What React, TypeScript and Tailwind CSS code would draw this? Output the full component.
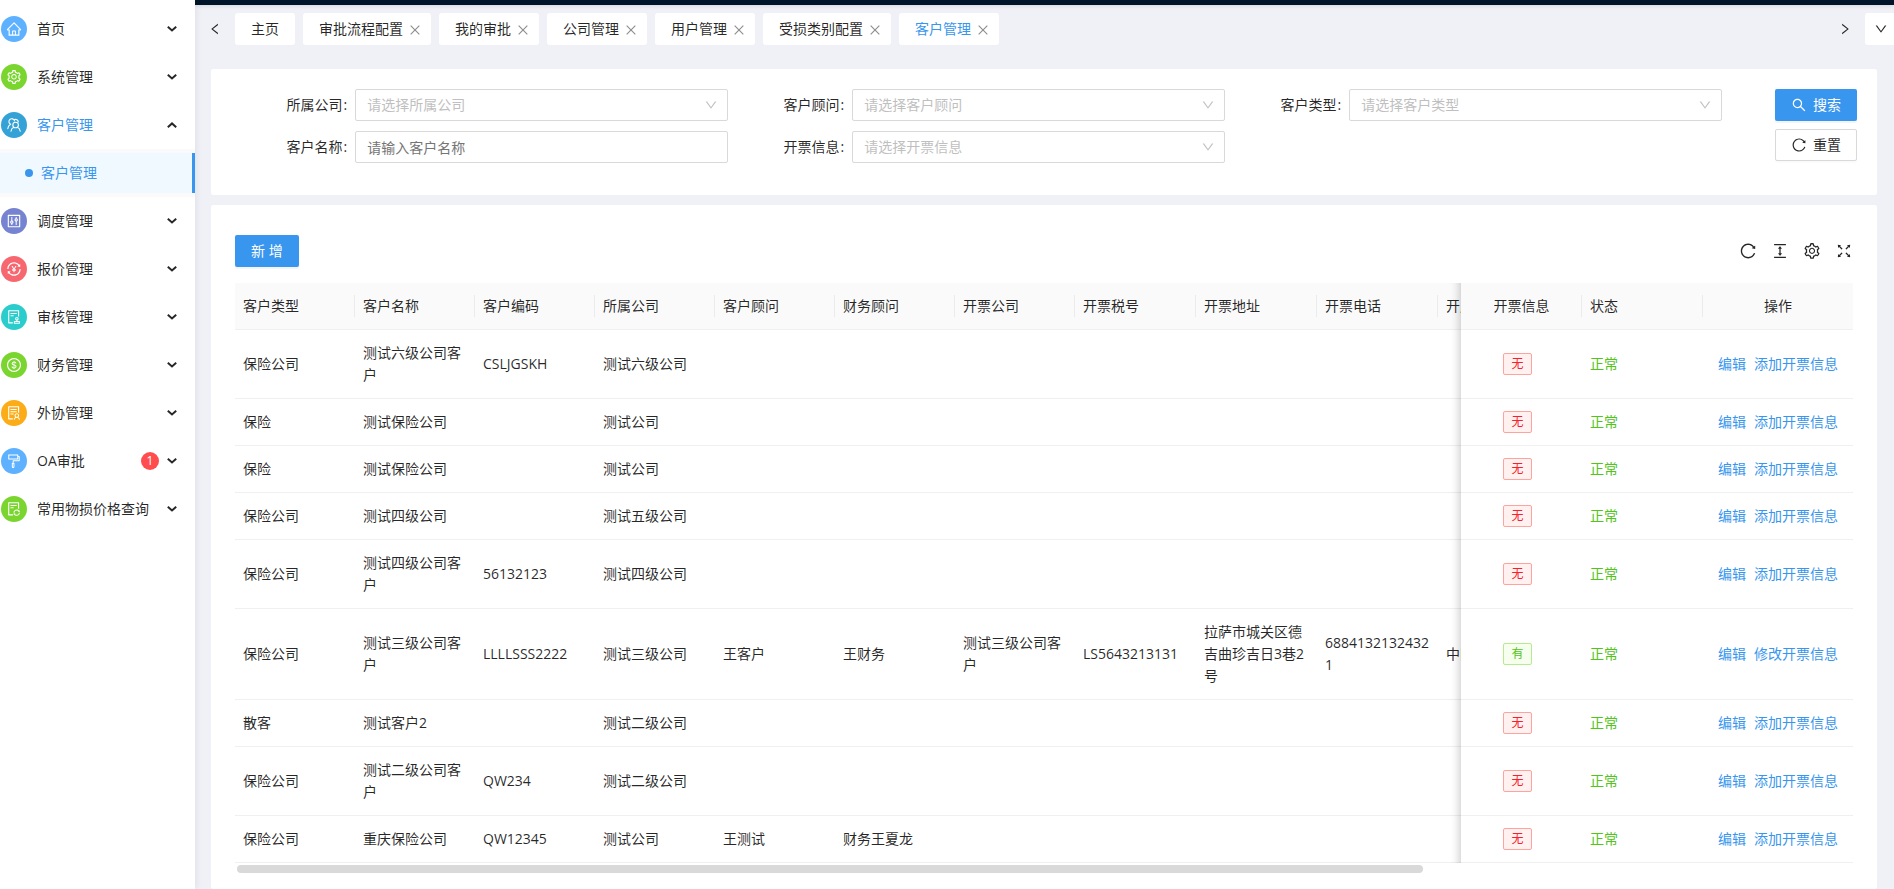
import { useState, type ReactNode } from "react";
import clsx from "clsx";
import {
  AiOutlineAudit,
  AiOutlineClose,
  AiOutlineColumnHeight,
  AiOutlineControl,
  AiOutlineDollar,
  AiOutlineDown,
  AiOutlineFileSync,
  AiOutlineFormatPainter,
  AiOutlineFullscreen,
  AiOutlineHome,
  AiOutlineLeft,
  AiOutlineReload,
  AiOutlineRight,
  AiOutlineSearch,
  AiOutlineSetting,
  AiOutlineSolution,
  AiOutlineTransaction,
} from "react-icons/ai";

const MENU = [
  { label: "首页", color: "bg-[#5eb1ff]", icon: <AiOutlineHome /> },
  { label: "系统管理", color: "bg-[#7ad52f]", icon: <AiOutlineSetting /> },
  { label: "客户管理", color: "bg-[#34a2d6]", icon: <UsersIcon />, children: ["客户管理"] },
  { label: "调度管理", color: "bg-[#7583d1]", icon: <AiOutlineControl /> },
  { label: "报价管理", color: "bg-[#f7676f]", icon: <AiOutlineTransaction /> },
  { label: "审核管理", color: "bg-[#2bcdcc]", icon: <AiOutlineAudit /> },
  { label: "财务管理", color: "bg-[#7ad52f]", icon: <AiOutlineDollar /> },
  { label: "外协管理", color: "bg-[#fcac17]", icon: <AiOutlineSolution /> },
  { label: "OA审批", color: "bg-[#5eb1ff]", icon: <AiOutlineFormatPainter />, badge: 1 },
  { label: "常用物损价格查询", color: "bg-[#7ad52f]", icon: <AiOutlineFileSync /> },
];

const TABS = ["主页", "审批流程配置", "我的审批", "公司管理", "用户管理", "受损类别配置", "客户管理"];

const COLUMNS = ["客户类型", "客户名称", "客户编码", "所属公司", "客户顾问", "财务顾问", "开票公司", "开票税号", "开票地址", "开票电话", "开户银行"];

const ROWS = [
  { cells: ["保险公司", "测试六级公司客户", "CSLJGSKH", "测试六级公司"], invoice: false },
  { cells: ["保险", "测试保险公司", "", "测试公司"], invoice: false },
  { cells: ["保险", "测试保险公司", "", "测试公司"], invoice: false },
  { cells: ["保险公司", "测试四级公司", "", "测试五级公司"], invoice: false },
  { cells: ["保险公司", "测试四级公司客户", "56132123", "测试四级公司"], invoice: false },
  {
    cells: ["保险公司", "测试三级公司客户", "LLLLSSS2222", "测试三级公司", "王客户", "王财务", "测试三级公司客户", "LS5643213131", "拉萨市城关区德吉曲珍吉日3巷2号", "68841321324321", "中国银行"],
    invoice: true,
  },
  { cells: ["散客", "测试客户2", "", "测试二级公司"], invoice: false },
  { cells: ["保险公司", "测试二级公司客户", "QW234", "测试二级公司"], invoice: false },
  { cells: ["保险公司", "重庆保险公司", "QW12345", "测试公司", "王测试", "财务王夏龙"], invoice: false },
];

export default function App() {
  return (
    <div className="flex min-h-screen bg-[#f0f1f6] font-['Open_Sans','Noto_Sans_CJK_SC',sans-serif] text-sm leading-[22px] text-black/85">
      <Sidebar />
      <div className="flex min-w-0 flex-1 flex-col">
        <header className="h-[5px] shrink-0 bg-[#001529] shadow-[0_1px_4px_rgba(0,21,41,0.12)]" />
        <TabBar />
        <main className="flex flex-1 flex-col gap-2.5 pt-6 pr-[17px] pl-4">
          <SearchForm />
          <CustomerTable />
        </main>
      </div>
    </div>
  );
}

function Sidebar() {
  const [open, setOpen] = useState("客户管理");

  return (
    <aside className="z-10 w-[195px] shrink-0 bg-white pt-[5px] shadow-[2px_0_6px_rgba(0,21,41,0.06)]">
      <nav>
        <ul>
          {MENU.map((item) => {
            const expanded = open === item.label;
            return (
              <li key={item.label}>
                <button
                  type="button"
                  aria-expanded={expanded}
                  onClick={() => setOpen(expanded ? "" : item.label)}
                  className={clsx("flex h-12 w-full items-center pr-[18px] pl-px text-left", expanded && "text-[#3896ee]")}
                >
                  <span className={clsx("mr-2.5 flex size-[26px] shrink-0 items-center justify-center rounded-full text-base text-white", item.color)}>
                    {item.icon}
                  </span>
                  <span className="flex-1 whitespace-nowrap">{item.label}</span>
                  {item.badge && (
                    <span className="mr-2 flex size-[18px] items-center justify-center rounded-full bg-[#ff4d4f] text-xs text-white">{item.badge}</span>
                  )}
                  <MenuArrow up={expanded} />
                </button>
                {expanded && item.children && (
                  <ul className="bg-[#fafafa] py-1">
                    {item.children.map((child) => (
                      <li key={child}>
                        <a href="#" className="flex h-10 items-center gap-2 border-r-3 border-[#3896ee] bg-[#f0f9ff] pl-[25px] text-[#3896ee]">
                          <span className="size-2 rounded-full bg-[#3896ee]" />
                          {child}
                        </a>
                      </li>
                    ))}
                  </ul>
                )}
              </li>
            );
          })}
        </ul>
      </nav>
    </aside>
  );
}

function MenuArrow({ up }: { up: boolean }) {
  return (
    <svg viewBox="0 0 10 10" className="size-2.5 shrink-0 text-black/85" fill="none" stroke="currentColor" strokeWidth="2">
      <path d={up ? "M0.8 7.2 L5 3.4 L9.2 7.2" : "M0.8 2.8 L5 6.4 L9.2 2.8"} />
    </svg>
  );
}

function UsersIcon() {
  return (
    <svg viewBox="0 0 16 16" width="1em" height="1em" fill="none" stroke="currentColor" strokeWidth="1.1" strokeLinecap="round">
      <path d="M4.6 7.3 A2.9 2.9 0 1 1 8.6 3.9" />
      <path d="M4.6 7.3 C3 8.2 2 9.7 1.8 11.6" />
      <path d="M8.4 2.6 C10.2 1.8 12.1 2.9 12.3 4.9" />
      <circle cx="9.6" cy="8" r="2.8" />
      <path d="M5 14.2 C5.2 12.3 6.2 11 7.8 10.3" />
      <path d="M11.4 10.3 C13 11 14 12.3 14.2 14.2" />
    </svg>
  );
}

function TabBar() {
  const [active, setActive] = useState("客户管理");

  return (
    <div className="flex items-center overflow-hidden pt-2">
      <button type="button" aria-label="向左" className="flex h-8 w-10 shrink-0 items-center justify-center">
        <AiOutlineLeft className="size-3.5" />
      </button>
      <div className="flex min-w-0 flex-1 gap-2 overflow-hidden">
        {TABS.map((tab, i) => (
          <div key={tab} className={clsx("flex h-8 shrink-0 items-center rounded-[3px] bg-white pl-4", i === 0 ? "pr-4" : "pr-[9px]")}>
            <button type="button" onClick={() => setActive(tab)} className={clsx(active === tab && "text-[#3896ee]")}>
              {tab}
            </button>
            {i > 0 && (
              <button type="button" aria-label={`关闭${tab}`} className="ml-[5px] pt-0.5 text-black/45">
                <AiOutlineClose className="size-3.5" />
              </button>
            )}
          </div>
        ))}
      </div>
      <button type="button" aria-label="向右" className="flex h-8 w-10 shrink-0 items-center justify-center">
        <AiOutlineRight className="size-3.5" />
      </button>
      <button type="button" aria-label="更多" className="-mr-[3px] flex h-8 w-8 shrink-0 items-center justify-center rounded-[3px] bg-white">
        <AiOutlineDown className="size-3.5" />
      </button>
    </div>
  );
}

function Field({ id, label, children }: { id: string; label: string; children: ReactNode }) {
  return (
    <div className="flex items-center">
      <label htmlFor={id} className="w-1/4 shrink-0 pr-2 text-right">
        {label}
        <span className="ml-px">:</span>
      </label>
      <div className="relative flex-1">{children}</div>
    </div>
  );
}

function SelectField({ id, label }: { id: string; label: string }) {
  return (
    <Field id={id} label={label}>
      <select id={id} defaultValue="" className="h-8 w-full appearance-none rounded-xs border border-[#d9d9d9] bg-white px-[11px] text-[#bfbfbf]">
        <option value="">请选择{label}</option>
      </select>
      <AiOutlineDown className="pointer-events-none absolute top-[9px] right-2.5 size-3.5 text-black/25" />
    </Field>
  );
}

function SearchForm() {
  return (
    <form className="flex gap-[53px] rounded-xs bg-white px-5 pt-5 pb-8" onSubmit={(e) => e.preventDefault()}>
      <div className="grid flex-1 grid-cols-3 content-start gap-y-2.5">
        <SelectField id="company" label="所属公司" />
        <SelectField id="adviser" label="客户顾问" />
        <SelectField id="type" label="客户类型" />
        <Field id="name" label="客户名称">
          <input id="name" placeholder="请输入客户名称" className="h-8 w-full rounded-xs border border-[#d9d9d9] px-[11px] placeholder:text-[#757575]" />
        </Field>
        <SelectField id="invoice" label="开票信息" />
      </div>
      <div className="flex w-[82px] shrink-0 flex-col gap-2">
        <button type="submit" className="flex h-8 items-center justify-center gap-1.5 rounded-xs bg-[#3896ee] text-white shadow-[0_2px_0_rgba(0,0,0,0.045)]">
          <AiOutlineSearch className="size-4" />
          搜索
        </button>
        <button type="reset" className="flex h-8 items-center justify-center gap-1.5 rounded-xs border border-[#d9d9d9] bg-white shadow-[0_2px_0_rgba(0,0,0,0.015)]">
          <AiOutlineReload className="size-4" />
          重置
        </button>
      </div>
    </form>
  );
}

const TH = "relative h-[47px] border-b border-[#f0f0f0] bg-[#fafafa] px-2 font-normal";
const DIVIDER = "after:absolute after:top-3 after:right-0 after:h-[22px] after:w-px after:bg-black/6";
const TD = "border-b border-[#f0f0f0] bg-white px-2 py-3";
// shadow cast by the fixed columns over the scrolled ones
const FIXED_EDGE =
  "before:pointer-events-none before:absolute before:top-0 before:-bottom-px before:-left-[30px] before:w-[30px] before:shadow-[inset_-10px_0_8px_-8px_rgba(0,0,0,0.2)]";

function CustomerTable() {
  return (
    <section className="flex-1 rounded-xs bg-white px-6 pt-[30px] pb-4">
      <div className="mb-4 flex items-center justify-between">
        <button type="button" className="h-8 rounded-xs bg-[#3896ee] px-4 text-white shadow-[0_2px_0_rgba(0,0,0,0.045)]">
          新 增
        </button>
        <div className="flex gap-3.5 text-lg">
          <button type="button" aria-label="刷新"><AiOutlineReload /></button>
          <button type="button" aria-label="密度"><AiOutlineColumnHeight /></button>
          <button type="button" aria-label="列设置"><AiOutlineSetting /></button>
          <button type="button" aria-label="全屏"><AiOutlineFullscreen /></button>
        </div>
      </div>

      <div className="overflow-x-auto [scrollbar-width:none]">
        <table className="w-[2207px] table-fixed border-separate border-spacing-0 text-left">
          <colgroup>
            {COLUMNS.map((name, i) => (
              <col key={name} className={i < 7 ? "w-[120px]" : "w-[121px]"} />
            ))}
            <col />
            <col className="w-[121px]" />
            <col className="w-[121px]" />
            <col className="w-[150px]" />
          </colgroup>
          <thead>
            <tr>
              {COLUMNS.map((name) => (
                <th key={name} className={clsx(TH, DIVIDER)}>{name}</th>
              ))}
              <td className={TH} />
              <th className={clsx(TH, DIVIDER, FIXED_EDGE, "sticky right-[271px] text-center")}>开票信息</th>
              <th className={clsx(TH, DIVIDER, "sticky right-[150px]")}>状态</th>
              <th className={clsx(TH, "sticky right-0 text-center")}>操作</th>
            </tr>
          </thead>
          <tbody>
            {ROWS.map((row, r) => (
              <tr key={r}>
                {COLUMNS.map((name, i) => (
                  <td key={name} className={clsx(TD, "break-words")}>{row.cells[i]}</td>
                ))}
                <td className={TD} />
                <td className={clsx(TD, FIXED_EDGE, "sticky right-[271px]")}>
                  <Tag ok={row.invoice} />
                </td>
                <td className={clsx(TD, "sticky right-[150px] text-[#52c41a]")}>正常</td>
                <td className={clsx(TD, "sticky right-0")}>
                  <div className="flex justify-center gap-2 whitespace-nowrap text-[#3896ee]">
                    <a href="#">编辑</a>
                    <a href="#">{row.invoice ? "修改开票信息" : "添加开票信息"}</a>
                  </div>
                </td>
              </tr>
            ))}
          </tbody>
        </table>
      </div>
      <div className="px-0.5 pt-0.5">
        <div className="h-2 w-[73.5%] rounded-full bg-[#d9d9d9]" />
      </div>
    </section>
  );
}

function Tag({ ok }: { ok: boolean }) {
  return (
    <div className="flex justify-center pr-2">
      <span
        className={clsx(
          "rounded-xs border px-[7px] text-xs leading-5",
          ok ? "border-[#b7eb8f] bg-[#f6ffed] text-[#52c41a]" : "border-[#ffa39e] bg-[#fff1f0] text-[#f5222d]"
        )}
      >
        {ok ? "有" : "无"}
      </span>
    </div>
  );
}
